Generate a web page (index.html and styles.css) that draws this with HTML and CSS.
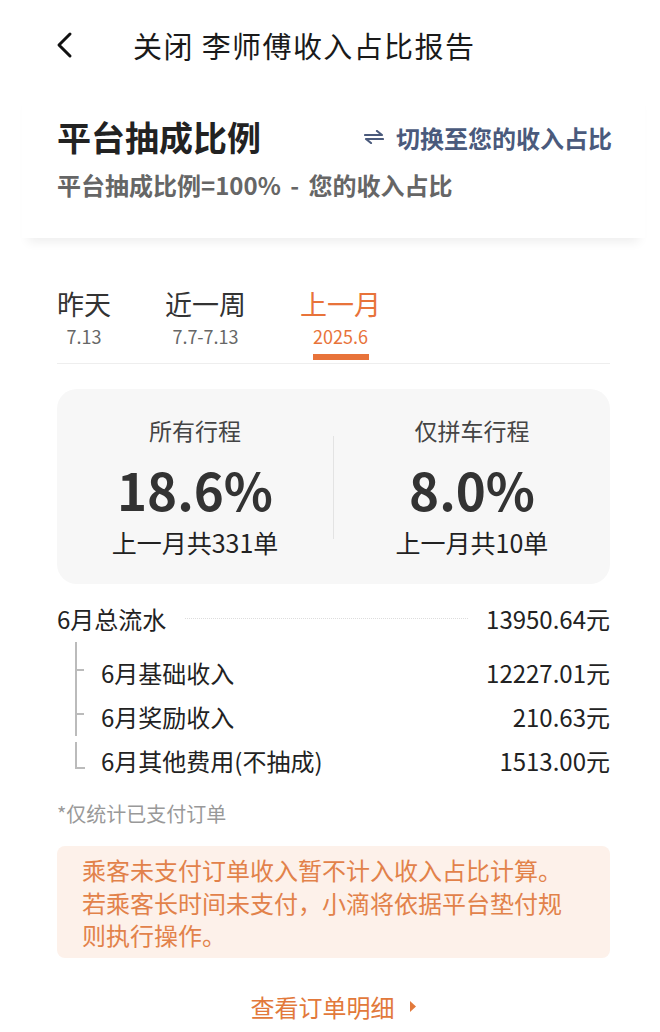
FILE: index.html
```html
<!DOCTYPE html>
<html lang="zh-CN">
<head>
<meta charset="utf-8">
<link rel="stylesheet" href="styles.css">
</head>
<body>
<div class="nav">
  <svg class="back" width="18" height="28" viewBox="0 0 18 28"><path d="M15 3 L4 14 L15 25" fill="none" stroke="#111" stroke-width="3" stroke-linecap="round" stroke-linejoin="round"/></svg>
  <div class="nav-title">关闭 李师傅收入占比报告</div>
</div>
<div class="top-card">
  <div class="title-row">
    <div class="title">平台抽成比例</div>
    <div class="switch"><svg class="switch-icon" width="20" height="14" viewBox="0 0 20 14"><path d="M1 5 H18 L13 1 M19 9 H2 L7 13" fill="none" stroke="#4a5a7c" stroke-width="2.2" stroke-linecap="round" stroke-linejoin="round"/></svg>切换至您的收入占比</div>
  </div>
  <div class="formula">平台抽成比例=100% - 您的收入占比</div>
</div>
<div class="main">
  <div class="tabs">
    <div class="tab"><div class="tab-label">昨天</div><div class="tab-date">7.13</div></div>
    <div class="tab"><div class="tab-label">近一周</div><div class="tab-date">7.7-7.13</div></div>
    <div class="tab active"><div class="tab-label">上一月</div><div class="tab-date">2025.6</div><div class="tab-bar"></div></div>
  </div>
  <div class="stats">
    <div class="stat">
      <div class="stat-label">所有行程</div>
      <div class="stat-value">18.6%</div>
      <div class="stat-count">上一月共331单</div>
    </div>
    <div class="stat-divider"></div>
    <div class="stat">
      <div class="stat-label">仅拼车行程</div>
      <div class="stat-value">8.0%</div>
      <div class="stat-count">上一月共10单</div>
    </div>
  </div>
  <div class="total-row">
    <span class="row-name">6月总流水</span>
    <span class="dots"></span>
    <span class="row-val">13950.64元</span>
  </div>
  <div class="tree">
    <div class="tree-line top"></div>
    <div class="sub-row"><span class="tick"></span><span class="row-name">6月基础收入</span><span class="row-val">12227.01元</span></div>
    <div class="sub-row"><span class="tick"></span><span class="row-name">6月奖励收入</span><span class="row-val">210.63元</span></div>
    <div class="sub-row last"><span class="corner"></span><span class="row-name">6月其他费用(不抽成)</span><span class="row-val">1513.00元</span></div>
  </div>
  <div class="footnote">*仅统计已支付订单</div>
  <div class="notice">乘客未支付订单收入暂不计入收入占比计算。<br>若乘客长时间未支付，小滴将依据平台垫付规则执行操作。</div>
  <div class="more">查看订单明细<svg class="caret" width="8" height="13" viewBox="0 0 8 13"><path d="M1 1 L7 6.5 L1 12 Z" fill="#e2793b"/></svg></div>
</div>
</body>
</html>
```

FILE: styles.css
```css
* { box-sizing: border-box; }
html, body { margin: 0; padding: 0; background: #fff; }
body {
  font-family: "Noto Sans CJK SC", "Noto Sans", sans-serif;
  color: #222;
  width: 660px;
  overflow: hidden;
}
.nav {
  height: 90px;
  display: flex;
  align-items: center;
  padding-left: 55px;
}
.back { display: block; }
.nav-title {
  margin-left: 60px;
  font-size: 29px;
  color: #1a1a1a;
  letter-spacing: 1.4px;
}
.top-card {
  margin: 0 15px 0 22px;
  padding: 22px 35px 34px 35px;
  box-shadow: 0 10px 10px -6px rgba(0,0,0,0.07);
}
.title-row {
  display: flex;
  align-items: center;
  justify-content: space-between;
}
.title {
  font-size: 34px;
  font-weight: 700;
  color: #222;
  line-height: 50px;
}
.switch {
  font-size: 24px;
  font-weight: 700;
  color: #4a5a7c;
  display: flex;
  align-items: center;
  margin-right: -2px;
}
.switch-icon {
  display: block;
  margin-right: 12px;
}
.formula {
  margin-top: 4px;
  font-size: 24px;
  font-weight: 700;
  color: #666;
  line-height: 38px;
  word-spacing: 4px;
}
.main {
  padding: 46px 50px 0 57px;
}
.tabs {
  display: flex;
  gap: 54px;
  border-bottom: 1px solid #eee;
  height: 80px;
}
.tab {
  display: flex;
  flex-direction: column;
  align-items: center;
}
.tab-label {
  font-size: 27px;
  color: #333;
  line-height: 39px;
}
.tab-date {
  font-size: 18px;
  color: #666;
  line-height: 26px;
}
.tab.active .tab-label, .tab.active .tab-date { color: #e8733a; }
.tab-bar {
  margin-top: 5px;
  width: 56px;
  height: 6px;
  background: #e8733a;
}
.stats {
  margin-top: 25px;
  height: 195px;
  background: #f7f7f7;
  border-radius: 20px;
  display: flex;
  align-items: flex-start;
  padding-top: 24px;
}
.stat {
  flex: 1;
  display: flex;
  flex-direction: column;
  align-items: center;
}
.stat-label {
  font-size: 23px;
  color: #444;
  line-height: 34px;
}
.stat-value {
  font-size: 51px;
  font-weight: 700;
  color: #333;
  line-height: 64px;
  margin-top: 10px;
}
.stat-count {
  font-size: 25px;
  color: #222;
  line-height: 38px;
  margin-top: 2px;
}
.stat-divider {
  width: 1px;
  height: 103px;
  margin-top: 23px;
  background: #e3e3e3;
}
.total-row, .sub-row {
  display: flex;
  align-items: center;
  font-size: 24px;
  color: #222;
  height: 44px;
}
.total-row { margin-top: 12px; }
.dots {
  flex: 1;
  margin: 0 18px 0 19px;
  border-top: 1px dotted #ddd;
}
.row-val { margin-left: auto; }
.tree {
  position: relative;
  padding-top: 10px;
}
.tree-line.top {
  position: absolute;
  left: 18px;
  top: 2px;
  width: 2px;
  height: 94px;
  background: #bbb;
}
.sub-row { position: relative; padding-left: 44px; }
.tick {
  position: absolute;
  left: 18px;
  top: 19px;
  width: 9px;
  height: 2px;
  background: #bbb;
}
.corner {
  position: absolute;
  left: 18px;
  top: 4px;
  width: 10px;
  height: 27px;
  border-left: 2px solid #bbb;
  border-bottom: 2px solid #bbb;
}
.footnote {
  margin-top: 17px;
  font-size: 20px;
  color: #999;
  line-height: 30px;
}
.notice {
  margin-top: 17px;
  background: #fdf1ea;
  border-radius: 8px;
  padding: 8px 38px 6px 25px;
  font-size: 24px;
  line-height: 32.5px;
  color: #e2824a;
}
.more {
  margin-top: 31px;
  display: flex;
  align-items: center;
  justify-content: center;
  font-size: 24px;
  color: #e2793b;
  line-height: 36px;
}
.caret { margin-left: 14px; }
```
